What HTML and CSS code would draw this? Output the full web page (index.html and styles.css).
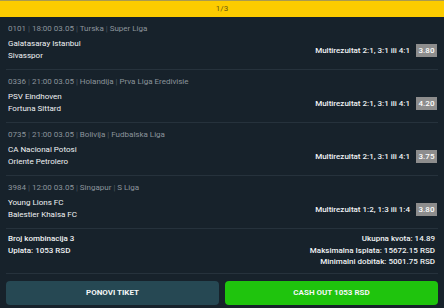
FILE: index.html
```html
<!DOCTYPE html>
<html>
<head>
<meta charset="utf-8">
<link rel="stylesheet" href="styles.css">
</head>
<body>
<div class="pager">1/3</div>
<div class="matches">
  <div class="match">
    <div class="meta">0101 <span class="sep">|</span> 18:00 03.05 <span class="sep">|</span> Turska <span class="sep">|</span> Super Liga</div>
    <div class="row">
      <div class="teams"><div>Galatasaray Istanbul</div><div>Sivasspor</div></div>
      <div class="pick"><span class="market">Multirezultat 2:1, 3:1 ili 4:1</span><span class="odd">3.80</span></div>
    </div>
  </div>
  <div class="match">
    <div class="meta">0336 <span class="sep">|</span> 21:00 03.05 <span class="sep">|</span> Holandija <span class="sep">|</span> Prva Liga Eredivisie</div>
    <div class="row">
      <div class="teams"><div>PSV Eindhoven</div><div>Fortuna Sittard</div></div>
      <div class="pick"><span class="market">Multirezultat 2:1, 3:1 ili 4:1</span><span class="odd">4.20</span></div>
    </div>
  </div>
  <div class="match">
    <div class="meta">0735 <span class="sep">|</span> 21:00 03.05 <span class="sep">|</span> Bolivija <span class="sep">|</span> Fudbalska Liga</div>
    <div class="row">
      <div class="teams"><div>CA Nacional Potosi</div><div>Oriente Petrolero</div></div>
      <div class="pick"><span class="market">Multirezultat 2:1, 3:1 ili 4:1</span><span class="odd">3.75</span></div>
    </div>
  </div>
  <div class="match">
    <div class="meta">3984 <span class="sep">|</span> 12:00 03.05 <span class="sep">|</span> Singapur <span class="sep">|</span> S Liga</div>
    <div class="row">
      <div class="teams"><div>Young Lions FC</div><div>Balestier Khalsa FC</div></div>
      <div class="pick"><span class="market">Multirezultat 1:2, 1:3 ili 1:4</span><span class="odd">3.80</span></div>
    </div>
  </div>
  <div class="summary">
    <div class="sum-left"><div>Broj kombinacija 3</div><div>Uplata: 1053 RSD</div></div>
    <div class="sum-right"><div>Ukupna kvota: 14.89</div><div>Maksimalna Isplata: 15672.15 RSD</div><div>Minimalni dobitak: 5001.75 RSD</div></div>
  </div>
</div>
<div class="actions">
  <button class="btn btn-repeat">PONOVI TIKET</button>
  <button class="btn btn-cash">CASH OUT 1053 RSD</button>
</div>
</body>
</html>
```
FILE: styles.css
```css
* { box-sizing: border-box; }
html, body { margin: 0; padding: 0; }
body {
  width: 444px;
  height: 308px;
  background: #17222b;
  font-family: Roboto, "Noto Sans", sans-serif;
  font-size: 8px;
  color: #f0f2f4;
  overflow: hidden;
}
.pager {
  height: 17px;
  border-top: 1px solid #a99a50;
  background: #fccc00;
  color: #6a5a10;
  font-size: 8px;
  line-height: 15px;
  text-align: center;
}
.matches { margin: 0 6px; }
.match {
  padding: 7px 1px 7px 2px;
  border-bottom: 1px solid #26323c;
}
.meta {
  color: #8b949b;
  line-height: 10px;
  font-size: 8px;
}
.sep { color: #4e5860; }
.row {
  margin-top: 4px;
  display: flex;
  align-items: center;
  justify-content: space-between;
}
.teams div { line-height: 12px; }
.pick { display: flex; align-items: center; gap: 6px; }
.market { font-weight: 500; }
.odd {
  background: #8d8d8d;
  color: #fff;
  width: 21px;
  height: 13px;
  line-height: 13px;
  text-align: center;
  font-weight: 500;
}
.summary {
  display: flex;
  justify-content: space-between;
  padding: 4px 3px 5px 2px;
  border-bottom: 1px solid #26323c;
  font-weight: 500;
}
.summary div div { line-height: 11.5px; }
.sum-right { text-align: right; }
.actions {
  display: flex;
  gap: 6px;
  margin: 7px 6px 0;
}
.btn {
  flex: 1;
  height: 24px;
  border: none;
  border-radius: 4px;
  font-family: Roboto, "Noto Sans", sans-serif;
  font-size: 8px;
  font-weight: 700;
  color: #f4f6f7;
}
.btn-repeat { background: #264853; }
.btn-cash { background: #1fc40d; }
```
